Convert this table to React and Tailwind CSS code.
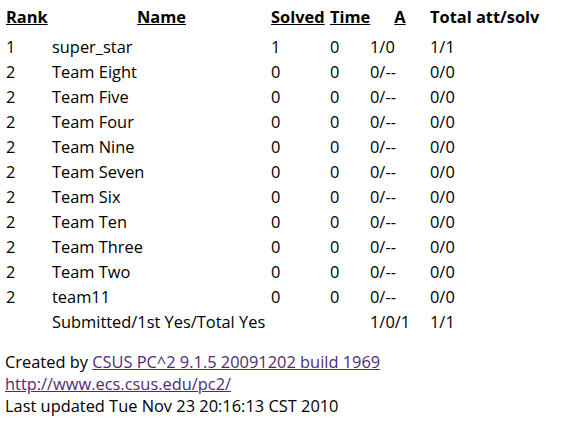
const ROWS = [
  ['1', 'super_star', '1', '0', '1/0', '1/1'],
  ['2', 'Team Eight', '0', '0', '0/--', '0/0'],
  ['2', 'Team Five', '0', '0', '0/--', '0/0'],
  ['2', 'Team Four', '0', '0', '0/--', '0/0'],
  ['2', 'Team Nine', '0', '0', '0/--', '0/0'],
  ['2', 'Team Seven', '0', '0', '0/--', '0/0'],
  ['2', 'Team Six', '0', '0', '0/--', '0/0'],
  ['2', 'Team Ten', '0', '0', '0/--', '0/0'],
  ['2', 'Team Three', '0', '0', '0/--', '0/0'],
  ['2', 'Team Two', '0', '0', '0/--', '0/0'],
  ['2', 'team11', '0', '0', '0/--', '0/0'],
]

const COLS = 'grid grid-cols-[46px_219px_59px_40px_60px_1fr] h-[25px] items-center'

export default function App() {
  return (
    <div
      className="w-[570px] h-[422px] bg-white text-black text-[16.4px] pl-[6px] pt-[5px]"
      style={{ fontFamily: '"Open Sans", "Noto Sans", sans-serif' }}
    >
      {/* ── Standings ── */}
      <div className={COLS + ' font-bold !h-[25px] mb-[5px]'}>
        <span className="underline">Rank</span>
        <span className="underline text-center">Name</span>
        <span className="underline">Solved</span>
        <span className="underline">Time</span>
        <span className="underline text-center">A</span>
        <span>Total att/solv</span>
      </div>
      {ROWS.map((r, i) => (
        <div key={i} className={COLS}>
          {r.map((c, j) => <span key={j}>{c}</span>)}
        </div>
      ))}
      <div className={COLS}>
        <span />
        <span className="col-span-3">Submitted/1st Yes/Total Yes</span>
        <span>1/0/1</span>
        <span>1/1</span>
      </div>

      {/* ── Footer ── */}
      <div className="mt-[16px] -ml-[1px] leading-[22px]">
        <div>
          Created by{' '}
          <a className="underline text-[#4f2a78]" href="#">CSUS PC^2 9.1.5 20091202 build 1969</a>
        </div>
        <div>
          <a className="underline text-[#4f2a78]" href="#">http://www.ecs.csus.edu/pc2/</a>
        </div>
        <div>Last updated Tue Nov 23 20:16:13 CST 2010</div>
      </div>
    </div>
  )
}
